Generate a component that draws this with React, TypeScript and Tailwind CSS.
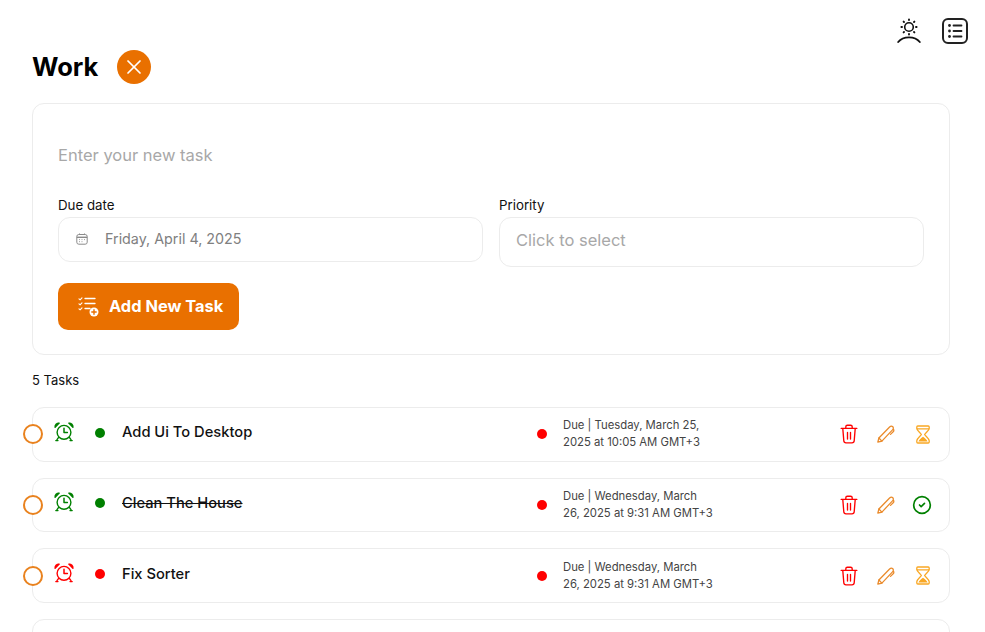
import { CircleCheck, X } from "lucide-react";

function SunHorizon() {
  return (
    <svg width="26" height="26" viewBox="0 0 26 26" fill="none" stroke="#111" strokeLinecap="round">
      <circle cx="13" cy="9" r="4.3" strokeWidth="1.6" />
      <path d="M13 1.4v.6M13 16v.6M5.4 9h.6M20 9h.6M7.6 3.6l.4.4M18 14l.4.4M7.6 14.4l.4-.4M18 4l.4-.4" strokeWidth="1.9" />
      <path d="M2.2 24C5 20.6 8.8 19.4 13 19.4s8 1.2 10.8 4.6" strokeWidth="1.9" />
    </svg>
  );
}

function ListBox() {
  return (
    <svg width="26" height="26" viewBox="0 0 26 26" fill="none" stroke="#222" strokeLinecap="round">
      <rect x="1" y="1" width="24" height="24" rx="5" strokeWidth="2" />
      <path d="M11.5 7.5h8M11.5 13h8M11.5 18.5h8" strokeWidth="1.8" />
      <circle cx="7.5" cy="7.5" r="1.4" fill="#222" stroke="none" />
      <circle cx="7.5" cy="13" r="1.4" fill="#222" stroke="none" />
      <circle cx="7.5" cy="18.5" r="1.4" fill="#222" stroke="none" />
    </svg>
  );
}

function CalendarIcon() {
  return (
    <svg width="12" height="12" viewBox="0 0 12 12" fill="none" stroke="#8a8a8a" strokeWidth="1">
      <rect x="0.8" y="1.5" width="10.4" height="9.7" rx="2" />
      <path d="M0.8 4.3h10.4" strokeWidth="1.4" />
      <path d="M3.5.5v1.5M8.5.5v1.5" />
      <path d="M3.2 6.6h.8M5.6 6.6h.8M8 6.6h.8M3.2 8.7h.8M5.6 8.7h.8" />
    </svg>
  );
}

function AddTaskIcon() {
  return (
    <svg width="21" height="21" viewBox="0 0 21 21" fill="none" stroke="#fff" strokeLinecap="round">
      <path d="M1 2.8l1.1 1L4 1.8M1 7.8l1.1 1L4 6.8M1 12.8l1.1 1L4 11.8" strokeWidth="1.1" />
      <path d="M7 2.5h10M7 7.5h10M7 12.5h5" strokeWidth="1.3" />
      <circle cx="16" cy="16" r="4.5" fill="#fff" stroke="none" />
      <path d="M16 13.8v4.4M13.8 16h4.4" stroke="#ea7000" strokeWidth="1.4" />
    </svg>
  );
}

function Alarm({ color }: { color: string }) {
  return (
    <svg width="20" height="20" viewBox="0 0 20 20" fill="none" stroke={color} strokeWidth="1.4" strokeLinecap="round" strokeLinejoin="round">
      <circle cx="10" cy="10.3" r="6.9" />
      <path d="M1.1 5.3C.7 2.9 2.7 .9 5.2 1.1zM18.9 5.3C19.3 2.9 17.3 .9 14.8 1.1z" />
      <path d="M4.8 15.2L3 17.6M15.2 15.2l1.8 2.4M1.8 18.6h2.2M16 18.6h2.2" />
      <path d="M10 6.3V10.6h3.4" strokeWidth="1.5" />
    </svg>
  );
}

function Trash() {
  return (
    <svg width="18" height="20" viewBox="0 0 18 20" fill="none" stroke="#ff0000" strokeWidth="1.35" strokeLinecap="round" strokeLinejoin="round">
      <path d="M1.2 4.4h15.6" />
      <path d="M5.8 4.2V2.8C5.8 1.8 6.5 1.2 7.4 1.2h3.2c.9 0 1.6.6 1.6 1.6v1.4" />
      <path d="M2.8 4.6l1 12.2c.1 1.2 1 2 2.2 2h6c1.2 0 2.1-.8 2.2-2l1-12.2" />
      <path d="M7.5 8.4v6.6M10.5 8.4v6.6" />
    </svg>
  );
}

function Pen() {
  return (
    <svg width="18" height="18" viewBox="0 0 18 18" fill="none" stroke="#ea8a2a" strokeWidth="1.25" strokeLinejoin="round" strokeLinecap="round">
      <path d="M.8 17.2l1.1-4.2L12.6 2c1-1 2.4-1.1 3.2-.3.8.8.7 2.2-.3 3.2L4.9 16.1l-4.1 1.1z" />
      <path d="M1.9 13l3 3.1" />
      <path d="M16.4 4.2c.7 1 .5 1.8-.2 2.5l-2.7 2.7" />
    </svg>
  );
}

function Hourglass() {
  return (
    <svg width="14" height="19" viewBox="0 0 14 19" fill="none" stroke="#f9a825" strokeWidth="1.3" strokeLinejoin="round" strokeLinecap="round">
      <path d="M1.8 1h10.4c.6 0 1 .4 1 1v1.2c0 2.3-3.4 4.3-4.6 6.3 1.2 2 4.6 4 4.6 6.3V17c0 .6-.4 1-1 1H1.8c-.6 0-1-.4-1-1v-1.2c0-2.3 3.4-4.3 4.6-6.3C4.200 7.500.8 5.500.8 3.200V2c0-.6.4-1 1-1z" />
      <path d="M1 3.800h12" />
      <path d="M2.400 16.600c.6-2 2.800-3.400 4.600-4.800 1.800 1.400 4 2.800 4.600 4.800z" fill="#f9a825" stroke="none" />
    </svg>
  );
}

type Task = { title: string; done?: boolean; high?: boolean; due: [string, string] };

const tasks: Task[] = [
  { title: "Add Ui To Desktop", due: ["Due | Tuesday, March 25,", "2025 at 10:05 AM GMT+3"] },
  { title: "Clean The House", done: true, due: ["Due | Wednesday, March", "26, 2025 at 9:31 AM GMT+3"] },
  { title: "Fix Sorter", high: true, due: ["Due | Wednesday, March", "26, 2025 at 9:31 AM GMT+3"] },
];

function Row({ task }: { task: Task }) {
  return (
    <div className="flex h-[54.67px] items-center rounded-xl border border-[#ececec] bg-white">
      <span className="ml-[-10px] h-5 w-5 shrink-0 rounded-full border-2 border-[#e9821e] bg-white" />
      <span className="mb-[5px] ml-[11px] shrink-0">
        <Alarm color={task.high ? "#ff0000" : "#008000"} />
      </span>
      <span className={`mb-[3px] ml-[21px] h-[10px] w-[10px] shrink-0 rounded-full ${task.high ? "bg-[#ff0000]" : "bg-[#008000]"}`} />
      <span className={`mb-[4px] ml-[17px] w-[415px] shrink-0 text-[14.7px] font-medium text-[#111] ${task.done ? "line-through" : ""}`}>
        {task.title}
      </span>
      <span className="h-[10px] w-[10px] shrink-0 rounded-full bg-[#ff0000]" />
      <div className="ml-[16px] w-[277px] shrink-0 text-[11.3px] leading-[17px] text-[#444]">
        <div>{task.due[0]}</div>
        <div>{task.due[1]}</div>
      </div>
      <Trash />
      <span className="ml-[19px] shrink-0"><Pen /></span>
      {task.done ? (
        <CircleCheck size={20} strokeWidth={2} className="ml-[17px] shrink-0 text-[#008000]" />
      ) : (
        <span className="ml-[21px] shrink-0"><Hourglass /></span>
      )}
    </div>
  );
}

export default function App() {
  return (
    <div className="h-[632px] w-[985px] overflow-hidden bg-white pl-[32px] pr-[35px] font-['Inter',sans-serif] text-black">
      <div className="mr-[-18px] flex justify-end gap-[20px] pt-[18px]">
        <SunHorizon />
        <ListBox />
      </div>
      <div className="mt-[3px] flex items-center gap-[19px]">
        <h1 className="text-[25.5px] font-bold leading-[40px]">Work</h1>
        <span className="flex h-[34px] w-[34px] items-center justify-center rounded-full bg-[#e97000] text-white">
          <X size={24} strokeWidth={1.7} />
        </span>
      </div>
      <div className="mt-[16px] h-[252px] rounded-xl border border-[#ececec] px-[25px]">
        <div className="pt-[41px] text-[16.5px] leading-[20px] text-[#a8a8a8]">Enter your new task</div>
        <div className="mt-[30px] flex gap-[16px]">
          <div className="w-[425px]">
            <div className="text-[13.3px] leading-[20px] text-[#111]">Due date</div>
            <div className="mt-[2px] flex h-[45px] items-center rounded-xl border border-[#ececec] pb-[2px] pl-[17px] text-[14.3px] text-[#808080]">
              <CalendarIcon />
              <span className="ml-[17px]">Friday, April 4, 2025</span>
            </div>
          </div>
          <div className="w-[425px]">
            <div className="text-[13.3px] leading-[20px] text-[#111]">Priority</div>
            <div className="mt-[2px] flex h-[50px] items-center rounded-xl border border-[#ececec] pb-[3px] pl-[16px] text-[16.5px] text-[#a8a8a8]">
              Click to select
            </div>
          </div>
        </div>
        <button className="mt-[16px] flex h-[47px] w-[181px] items-center rounded-[10px] bg-[#e97000] pl-[20px] text-[16.4px] font-bold text-white">
          <AddTaskIcon />
          <span className="mb-[1px] ml-[10px]">Add New Task</span>
        </button>
      </div>
      <div className="mt-[15px] text-[13px] leading-[20px] text-[#111]">5 Tasks</div>
      <div className="mt-[17px] flex flex-col gap-[16px]">
        {tasks.map((t) => (
          <Row key={t.title} task={t} />
        ))}
        <div className="h-[54.67px] shrink-0 rounded-xl border border-[#ececec]" />
      </div>
    </div>
  );
}
